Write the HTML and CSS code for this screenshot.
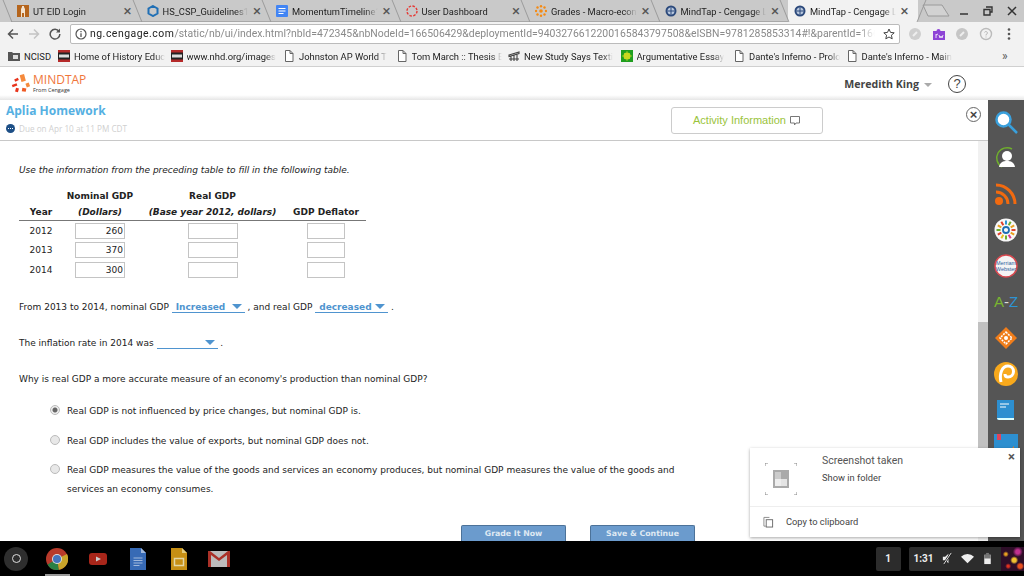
FILE: index.html
```html
<!DOCTYPE html>
<html lang="en">
<head>
  <meta charset="UTF-8">
  <title>MindTap - Cengage Learning</title>
  <link rel="stylesheet" href="styles.css">
</head>
<body>
  <!-- Tab strip -->
  <div class="tabstrip">
    <div class="tab">
      <svg class="favicon" viewBox="0 0 12 12"><rect width="12" height="12" fill="#b5651d"/><path d="M4 12V4l1-2V1h2v1l1 2v8H7V8H5v4z" fill="#f3e3cf"/></svg>
      <span class="tab-title">UT EID Login</span><span class="tab-x">×</span>
    </div>
    <div class="tab">
      <svg class="favicon" viewBox="0 0 12 12"><path d="M6 1l4.500 2.500v5L6 11 1.500 8.500v-5z" fill="none" stroke="#1f6fb5" stroke-width="2"/></svg>
      <span class="tab-title">HS_CSP_Guidelines1</span><span class="tab-x">×</span>
    </div>
    <div class="tab">
      <svg class="favicon" viewBox="0 0 12 12"><rect width="12" height="12" rx="1" fill="#4285f4"/><path d="M2.500 3.500h7M2.500 6h7M2.500 8.500h5" stroke="#fff"/></svg>
      <span class="tab-title">MomentumTimeline1</span><span class="tab-x">×</span>
    </div>
    <div class="tab">
      <svg class="favicon" viewBox="0 0 12 12"><circle cx="6" cy="6" r="5" fill="none" stroke="#e53935" stroke-width="1.400" stroke-dasharray="2.500 1.400"/></svg>
      <span class="tab-title">User Dashboard</span><span class="tab-x">×</span>
    </div>
    <div class="tab">
      <svg class="favicon" viewBox="0 0 12 12" fill="#f58a12"><circle cx="6" cy="6" r="1.800"/><circle cx="2.500" cy="2.500" r="1.200"/><circle cx="6" cy="1.200" r="1.200"/><circle cx="9.500" cy="2.500" r="1.200"/><circle cx="2.500" cy="9.500" r="1.200"/><circle cx="6" cy="10.800" r="1.200"/><circle cx="9.500" cy="9.500" r="1.200"/><circle cx="1" cy="6" r="1.200"/><circle cx="11" cy="6" r="1.200"/></svg>
      <span class="tab-title">Grades - Macro-econ</span><span class="tab-x">×</span>
    </div>
    <div class="tab">
      <svg class="favicon" viewBox="0 0 12 12"><circle cx="6" cy="6" r="5.500" fill="#2c4a7c"/><circle cx="6" cy="6" r="3.500" fill="#b9c8de"/><path d="M6 2.500v7M2.500 6h7" stroke="#2c4a7c"/></svg>
      <span class="tab-title">MindTap - Cengage L</span><span class="tab-x">×</span>
    </div>
    <div class="tab tab-active">
      <svg class="favicon" viewBox="0 0 12 12"><circle cx="6" cy="6" r="5.500" fill="#2c4a7c"/><circle cx="6" cy="6" r="3.500" fill="#b9c8de"/><path d="M6 2.500v7M2.500 6h7" stroke="#2c4a7c"/></svg>
      <span class="tab-title">MindTap - Cengage L</span><span class="tab-x">×</span>
    </div>
    <svg class="newtab" viewBox="0 0 28 13"><path d="M1 1h19l7 11H6z" fill="#d2d2d2" stroke="#9a9a9a"/></svg>
    <div class="winctrl">
      <svg viewBox="0 0 10 10"><path d="M1 8h8" stroke="#333" stroke-width="1.500"/></svg>
      <svg viewBox="0 0 10 10"><path d="M3 1h6v5H7M1 3.500h6v5.500H1z" fill="none" stroke="#333" stroke-width="1.400"/></svg>
      <svg viewBox="0 0 10 10"><path d="M1 1l8 8M9 1l-8 8" stroke="#333" stroke-width="1.500"/></svg>
    </div>
  </div>

  <!-- Toolbar -->
  <div class="toolbar">
    <svg class="nav-icon" viewBox="0 0 12 12"><path d="M11 6H2M6 1.500L1.500 6 6 10.500" fill="none" stroke="#555" stroke-width="1.500"/></svg>
    <svg class="nav-icon" viewBox="0 0 12 12"><path d="M1 6h9M6 1.500L10.500 6 6 10.500" fill="none" stroke="#c4c4c4" stroke-width="1.500"/></svg>
    <svg class="nav-icon" viewBox="0 0 12 12"><path d="M10 3.500A4.800 4.800 0 1 0 10.800 6" fill="none" stroke="#555" stroke-width="1.500"/><path d="M11 0.500V4.500H7z" fill="#555"/></svg>
    <div class="omnibox">
      <svg class="info" viewBox="0 0 12 12"><circle cx="6" cy="6" r="5" fill="none" stroke="#555" stroke-width="1.200"/><path d="M6 5.200V9M6 3v1.200" stroke="#555" stroke-width="1.300"/></svg>
      <span class="url"><b>ng.cengage.com</b>/static/nb/ui/index.html?nbId=472345&amp;nbNodeId=166506429&amp;deploymentId=9403276612200165843797508&amp;eISBN=9781285853314#!&amp;parentId=166506429</span>
      <svg class="star" viewBox="0 0 12 12"><path d="M6 1l1.500 3.400 3.700.4-2.800 2.400.8 3.600L6 9l-3.200 1.800.8-3.600L.8 4.800l3.700-.4z" fill="none" stroke="#444"/></svg>
    </div>
    <div class="extensions">
      <svg viewBox="0 0 14 14"><circle cx="7" cy="7" r="6" fill="#cfcfcf"/><path d="M5 9l4-4" stroke="#eee" stroke-width="2"/></svg>
      <svg viewBox="0 0 14 14"><path d="M1 4h3.500a2 2 0 0 1 4 0H13v9H1z" fill="#8e44d6"/><path d="M4 7v4M4 8l2-1M7 8l1 3 1-2 1 2 1-3" fill="none" stroke="#fff" stroke-width=".8"/></svg>
      <svg viewBox="0 0 14 14"><circle cx="7" cy="7" r="6" fill="#c6c6c6"/><path d="M5 9l4-4" stroke="#eee" stroke-width="2"/></svg>
      <svg viewBox="0 0 14 14"><circle cx="7" cy="7" r="5.500" fill="none" stroke="#bbb" stroke-width="1.400"/><path d="M5.500 5.500a1.500 1.500 0 1 1 1.500 2v1M7 9.500v1" fill="none" stroke="#bbb"/></svg>
      <svg viewBox="0 0 14 14" fill="#555"><circle cx="7" cy="2.500" r="1.300"/><circle cx="7" cy="7" r="1.300"/><circle cx="7" cy="11.500" r="1.300"/></svg>
    </div>
  </div>

  <!-- Bookmarks -->
  <div class="bookmarks">
    <div class="bm bm-first">
      <svg class="bm-icon" viewBox="0 0 12 12"><path d="M0 2h4l1 1h7v8H0z" fill="#555"/><rect x="5" y="5" width="5" height="4" fill="#ddd"/></svg>
      <span class="bm-label">NCISD</span>
    </div>
    <div class="bm">
      <svg class="bm-icon" viewBox="0 0 12 12"><rect width="12" height="12" fill="#222"/><rect y="0" width="12" height="2.500" fill="#b52a2a"/><rect y="9.500" width="12" height="2.500" fill="#b52a2a"/><rect x="1" y="4.500" width="10" height="3" fill="#ddd"/></svg>
      <span class="bm-label">Home of History Educ</span>
    </div>
    <div class="bm">
      <svg class="bm-icon" viewBox="0 0 12 12"><rect width="12" height="12" fill="#222"/><rect y="0" width="12" height="2.500" fill="#b52a2a"/><rect y="9.500" width="12" height="2.500" fill="#b52a2a"/><rect x="1" y="4.500" width="10" height="3" fill="#ddd"/></svg>
      <span class="bm-label">www.nhd.org/images</span>
    </div>
    <div class="bm">
      <svg class="bm-icon" viewBox="0 0 12 12"><path d="M2.500 .5h4.500l3 3v8h-7.500zM7 .5v3h3" fill="#fff" stroke="#666"/></svg>
      <span class="bm-label">Johnston AP World T</span>
    </div>
    <div class="bm">
      <svg class="bm-icon" viewBox="0 0 12 12"><path d="M2.500 .5h4.500l3 3v8h-7.500zM7 .5v3h3" fill="#fff" stroke="#666"/></svg>
      <span class="bm-label">Tom March :: Thesis E</span>
    </div>
    <div class="bm">
      <svg class="bm-icon" viewBox="0 0 12 12"><path d="M1 5l10-3v1.500L1 6.500zM3 6v5M6 5.500V11M9 4.500V11M1 9h10" fill="none" stroke="#444" stroke-width="1.100"/></svg>
      <span class="bm-label">New Study Says Texti</span>
    </div>
    <div class="bm">
      <svg class="bm-icon" viewBox="0 0 12 12"><rect width="12" height="12" fill="#1f9e1f"/><circle cx="6" cy="6" r="3.500" fill="#c8d820"/><path d="M6 1v10M1 6h10M3 3l6 6M9 3l-6 6" stroke="#c8d820" stroke-width=".7"/></svg>
      <span class="bm-label">Argumentative Essay</span>
    </div>
    <div class="bm">
      <svg class="bm-icon" viewBox="0 0 12 12"><path d="M2.500 .5h4.500l3 3v8h-7.500zM7 .5v3h3" fill="#fff" stroke="#666"/></svg>
      <span class="bm-label">Dante's Inferno - Prolo</span>
    </div>
    <div class="bm">
      <svg class="bm-icon" viewBox="0 0 12 12"><path d="M2.500 .5h4.500l3 3v8h-7.500zM7 .5v3h3" fill="#fff" stroke="#666"/></svg>
      <span class="bm-label">Dante's Inferno - Main</span>
    </div>
    <span class="bm-more">»</span>
  </div>

  <!-- MindTap header -->
  <div class="mt-header">
    <div class="logo">
      <svg class="logo-mark" viewBox="0 0 19 19">
        <rect x="9.500" y="0.500" width="4.500" height="7" transform="rotate(-15 11.700 4)" fill="#f58a3c"/>
        <rect x="15" y="9" width="3.500" height="4" transform="rotate(-20 16.700 11)" fill="#f58a3c"/>
        <rect x="11" y="14" width="4" height="3.500" transform="rotate(10 13 16)" fill="#ee5a24"/>
        <rect x="4.500" y="14" width="3" height="4" transform="rotate(15 6 16)" fill="#e8341c"/>
        <rect x="1" y="10" width="5" height="2.500" transform="rotate(-20 3.500 11)" fill="#e8341c"/>
        <rect x="3.500" y="4.500" width="4" height="2.500" transform="rotate(-25 5.500 5.700)" fill="#e8341c"/>
      </svg>
      <div class="logo-text">
        <div class="logo-name">MINDTAP</div>
        <div class="logo-sub">From Cengage</div>
      </div>
    </div>
    <div class="user">Meredith King<span class="caret"></span></div>
    <div class="help">?</div>
  </div>

  <div class="app">
    <div class="main">
      <div class="activity-head">
        <div>
          <div class="activity-title">Aplia Homework</div>
          <div class="due">
            <svg class="due-dot" viewBox="0 0 9 9"><circle cx="4.500" cy="4.500" r="4.500" fill="#1d4f86"/><path d="M2 4.500h1M4 4.500h1M6 4.500h1" stroke="#fff"/></svg>
            Due on Apr 10 at 11 PM CDT
          </div>
        </div>
        <div class="activity-info"><span class="info-label">Activity Information</span>
          <svg viewBox="0 0 12 12"><path d="M1.500 1.500h9v6.500H7l-1.500 2V8h-4z" fill="none" stroke="#777"/></svg>
        </div>
        <div class="close-circle">×</div>
      </div>

      <div class="scroll-row">
        <div class="question">
          <p class="intro">Use the information from the preceding table to fill in the following table.</p>

          <table class="gdp">
            <thead>
              <tr class="h1"><th></th><th>Nominal GDP</th><th>Real GDP</th><th></th></tr>
              <tr class="h2"><th>Year</th><th><em>(Dollars)</em></th><th><em>(Base year 2012, dollars)</em></th><th>GDP Deflator</th></tr>
            </thead>
            <tbody>
              <tr><td>2012</td><td><span class="cell c1">260</span></td><td><span class="cell c2"></span></td><td><span class="cell c3"></span></td></tr>
              <tr><td>2013</td><td><span class="cell c1">370</span></td><td><span class="cell c2"></span></td><td><span class="cell c3"></span></td></tr>
              <tr><td>2014</td><td><span class="cell c1">300</span></td><td><span class="cell c2"></span></td><td><span class="cell c3"></span></td></tr>
            </tbody>
          </table>

          <p class="line l-a">From 2013 to 2014, nominal GDP <span class="pick p-wide">Increased<i></i></span> , and real GDP <span class="pick p-wide">decreased<i></i></span> .</p>
          <p class="line l-b">The inflation rate in 2014 was <span class="pick p-blank"><i></i></span> .</p>
          <p class="line l-c">Why is real GDP a more accurate measure of an economy's production than nominal GDP?</p>

          <div class="choice c-first"><span class="radio radio-on"></span><span>Real GDP is not influenced by price changes, but nominal GDP is.</span></div>
          <div class="choice"><span class="radio"></span><span>Real GDP includes the value of exports, but nominal GDP does not.</span></div>
          <div class="choice c-last"><span class="radio"></span><span>Real GDP measures the value of the goods and services an economy produces, but nominal GDP measures the value of the goods and services an economy consumes.</span></div>

          <div class="actions">
            <button class="btn">Grade It Now</button>
            <button class="btn">Save &amp; Continue</button>
          </div>
        </div>
        <div class="scrollbar"><div class="thumb"></div></div>
      </div>
    </div>

    <!-- Right tool dock -->
    <div class="dock">
      <svg viewBox="0 0 24 24"><circle cx="9.500" cy="9.500" r="7" fill="#fff" stroke="#3aa0dc" stroke-width="2.500"/><path d="M14.500 14.500l8.500 8.500" stroke="#3aa0dc" stroke-width="2.500"/></svg>
      <svg viewBox="0 0 24 24"><path d="M18 3A10 10 0 1 0 8 21" fill="none" stroke="#6fae2d" stroke-width="1.500"/><circle cx="13" cy="10" r="5" fill="#fff"/><path d="M5 21c1-5 4-6 8-6s7 1 8 6z" fill="#fff"/></svg>
      <svg viewBox="0 0 24 24"><circle cx="5" cy="19" r="4" fill="#f26a0f"/><path d="M2 10a12 12 0 0 1 12 12M2 3a19 19 0 0 1 19 19" fill="none" stroke="#f26a0f" stroke-width="3"/></svg>
      <svg viewBox="0 0 24 24">
        <circle cx="12" cy="12" r="11.500" fill="#f8f8f8"/>
        <g stroke-width="2">
          <path d="M12 2.500v4" stroke="#2d94d4"/><path d="M16.700 3.800l-2 3.500" stroke="#6fae2d"/><path d="M20.200 7.300l-3.500 2" stroke="#e8a020"/>
          <path d="M21.500 12h-4" stroke="#e0402c"/><path d="M20.200 16.700l-3.500-2" stroke="#e8a020"/><path d="M16.700 20.200l-2-3.500" stroke="#d83a8c"/>
          <path d="M12 21.500v-4" stroke="#6fae2d"/><path d="M7.300 20.200l2-3.500" stroke="#e8c020"/><path d="M3.800 16.700l3.500-2" stroke="#e0402c"/>
          <path d="M2.500 12h4" stroke="#6fae2d"/><path d="M3.800 7.300l3.500 2" stroke="#e8a020"/><path d="M7.300 3.800l2 3.500" stroke="#e0402c"/>
        </g>
        <circle cx="12" cy="12" r="3" fill="none" stroke="#1f6fb5" stroke-width="1.800"/>
      </svg>
      <svg viewBox="0 0 24 24"><circle cx="12" cy="12" r="11" fill="#f4f4f4" stroke="#d9484f" stroke-width="1.500"/><text x="12" y="11" class="mw-text">Merriam</text><text x="12" y="16.500" class="mw-text">Webster</text></svg>
      <div class="az"><span class="az-a">A</span><span class="az-d">-</span><span class="az-z">Z</span></div>
      <svg viewBox="0 0 24 24"><path d="M12 1l11 11-11 11L1 12z" fill="#f07d1a"/><path d="M12 6l6 6-6 6-6-6z" fill="none" stroke="#fff" stroke-width="1.500" stroke-dasharray="2 1"/><circle cx="12" cy="12" r="2" fill="#fff"/></svg>
      <svg viewBox="0 0 24 24"><circle cx="12" cy="12" r="12" fill="#f8a91c"/><path d="M7 20C5 12 8 4 14 4a5 5 0 0 1 0 11c-2 0-3-1-3-3" fill="none" stroke="#fff" stroke-width="3"/></svg>
      <svg viewBox="0 0 24 24"><path d="M3 2h17v20H5a2 2 0 0 1-2-2z" fill="#2d8fd0"/><path d="M3 20a2 2 0 0 0 2 2h15v-2H5z" fill="#dff"/><path d="M6 6h9M6 9h6" stroke="#fff"/></svg>
      <svg viewBox="0 0 24 24"><rect width="24" height="24" fill="#2d8fd0"/><rect x="3" y="0" width="4" height="6" fill="#e0445c"/><path d="M12 22l8-10v10z" fill="#f07d1a"/></svg>
    </div>
  </div>

  <!-- Screenshot notification -->
  <div class="toast">
    <span class="toast-x">×</span>
    <div class="toast-top">
      <svg class="toast-thumb" viewBox="0 0 32 32">
        <path d="M0 3V0h3M29 0h3v3M32 29v3h-3M3 32H0v-3" fill="none" stroke="#888"/>
        <rect x="8" y="7" width="16" height="18" fill="#aaa"/><rect x="10" y="9" width="6" height="7" fill="#ccc"/><rect x="16" y="16" width="6" height="7" fill="#e4e4e4"/><rect x="10" y="16" width="6" height="7" fill="#eee"/>
      </svg>
      <div>
        <div class="toast-title">Screenshot taken</div>
        <div class="toast-sub">Show in folder</div>
      </div>
    </div>
    <div class="toast-action">
      <svg viewBox="0 0 12 12"><path d="M3 10.500H1V1h6" fill="none" stroke="#888"/><rect x="3.500" y="3.500" width="7" height="8" fill="none" stroke="#666"/></svg>
      <span>Copy to clipboard</span>
    </div>
  </div>

  <!-- Chrome OS shelf -->
  <div class="shelf">
    <div class="launcher"><span></span></div>
    <div class="app-icon app-running">
      <svg viewBox="0 0 22 22"><circle cx="11" cy="11" r="11" fill="#b83a2b"/><path d="M11 11L1.500 16.500A11 11 0 0 0 13 21.800z" fill="#2a8044"/><path d="M11 11l2 10.800A11 11 0 0 0 21 6z" fill="#c9a42a"/><circle cx="11" cy="11" r="5" fill="#ddd"/><circle cx="11" cy="11" r="4" fill="#4474bd"/></svg>
    </div>
    <div class="app-icon">
      <svg viewBox="0 0 22 22"><rect x="2" y="5" width="18" height="12" rx="3" fill="#a8261a"/><path d="M9 8.500l5 2.500-5 2.500z" fill="#ccc"/></svg>
    </div>
    <div class="app-icon">
      <svg viewBox="0 0 22 22"><path d="M3 0h11l5 5v17H3z" fill="#376ab5"/><path d="M14 0l5 5h-5z" fill="#a0b8dc"/><path d="M6.500 10h9M6.500 12.500h9M6.500 15h9M6.500 17.500h6" stroke="#a0b8dc"/></svg>
    </div>
    <div class="app-icon">
      <svg viewBox="0 0 22 22"><path d="M3 0h11l5 5v17H3z" fill="#c68f15"/><path d="M14 0l5 5h-5z" fill="#e2cc80"/><rect x="6.500" y="10.500" width="9" height="7" fill="none" stroke="#e2d6a6" stroke-width="1.500"/></svg>
    </div>
    <div class="app-icon">
      <svg viewBox="0 0 22 22"><rect y="3" width="22" height="16" fill="#bcbcbc"/><path d="M0 3v16h3V7l8 6 8-6v12h3V3h-2l-9 7-9-7z" fill="#aa3128"/></svg>
    </div>
    <div class="status-count">1</div>
    <div class="status">
      <span class="clock">1:31</span>
      <svg viewBox="0 0 14 14"><path d="M2 5h2.500L8 2v10L4.500 9H2z" fill="#eee"/><path d="M11 1L3 13" stroke="#222" stroke-width="2.500"/><path d="M11 1L3 13" stroke="#eee"/></svg>
      <svg viewBox="0 0 14 14"><path d="M0 5a10 10 0 0 1 14 0L7 12z" fill="#eee"/></svg>
      <svg viewBox="0 0 14 14"><rect x="3.500" y="3" width="7" height="10" fill="#eee"/><rect x="3.500" y="3" width="7" height="4" fill="#777"/><rect x="5.500" y="1" width="3" height="2" fill="#777"/></svg>
      <div class="wallpaper"></div>
    </div>
  </div>
</body>
</html>
```
FILE: styles.css
```css
/* page frame */
html, body {
  margin: 0;
  padding: 0;
  width: 1024px;
  height: 576px;
  overflow: hidden;
}
body {
  position: relative;
  display: flex;
  flex-direction: column;
  font-family: "DejaVu Sans", Verdana, sans-serif;
  background: #fff;
  color: #222;
}

/* tabs */
.tabstrip {
  height: 22px;
  flex: none;
  display: flex;
  align-items: stretch;
  padding-left: 11px;
  background: #c9c9c9;
  border-bottom: 0;
  font-family: Roboto, sans-serif;
  font-size: 9.300px;
  color: #222;
}
.tab {
  position: relative;
  width: 129.500px;
  flex: none;
  display: flex;
  align-items: center;
  box-sizing: border-box;
  padding: 0 6px 0 6px;
  box-shadow: inset 0 -1px 0 #a8a8a8;
}
.tab::before {
  content: "";
  position: absolute;
  left: -4px;
  top: 0;
  bottom: 0;
  border-left: 1px solid #9b9b9b;
  transform: skewX(22deg);
}
.tab-active {
  background: #f2f2f2;
  box-shadow: none;
}
.tab-active::after {
  content: "";
  position: absolute;
  right: -4px;
  top: 0;
  bottom: 0;
  border-left: 1px solid #9b9b9b;
  transform: skewX(-22deg);
}
.favicon {
  width: 12px;
  height: 12px;
  flex: none;
  margin-right: 4px;
}
.tab-title {
  flex: 1;
  white-space: nowrap;
  overflow: hidden;
  -webkit-mask-image: linear-gradient(90deg, #000 85%, transparent);
  mask-image: linear-gradient(90deg, #000 85%, transparent);
}
.tab-x {
  width: 14px;
  flex: none;
  text-align: center;
  font-size: 15px;
  color: #555;
  margin-left: 2px;
}
.newtab {
  width: 28px;
  height: 13px;
  flex: none;
  margin: 4px 0 0 4px;
}
.winctrl {
  margin-left: auto;
  display: flex;
  align-items: center;
  gap: 14px;
  padding-right: 7px;
}
.winctrl svg {
  width: 10px;
  height: 10px;
}

/* toolbar */
.toolbar {
  height: 23px;
  flex: none;
  display: flex;
  align-items: center;
  background: #f2f2f2;
  padding-left: 7px;
}
.nav-icon {
  width: 12px;
  height: 12px;
  flex: none;
  margin-right: 9px;
}
.omnibox {
  width: 830px;
  height: 20px;
  flex: none;
  box-sizing: border-box;
  display: flex;
  align-items: center;
  padding: 0 4px;
  background: #fff;
  border: 1px solid #bbb;
  border-radius: 2px;
  font-family: Roboto, sans-serif;
  font-size: 10.450px;
  color: #8a8a8a;
}
.info {
  width: 12px;
  height: 12px;
  flex: none;
  margin-right: 3px;
}
.url {
  flex: 1;
  overflow: hidden;
  white-space: nowrap;
  -webkit-mask-image: linear-gradient(90deg, #000 98%, transparent);
  mask-image: linear-gradient(90deg, #000 98%, transparent);
}
.url b {
  font-weight: 400;
  color: #222;
  letter-spacing: 0.500px;
}
.star {
  width: 12px;
  height: 12px;
  flex: none;
  margin-left: 8px;
}
.extensions {
  display: flex;
  gap: 9.500px;
  padding-left: 8px;
}
.extensions svg {
  width: 14px;
  height: 14px;
}

/* bookmarks */
.bookmarks {
  height: 22px;
  flex: none;
  box-sizing: border-box;
  display: flex;
  align-items: center;
  padding-left: 8px;
  background: #f2f2f2;
  border-bottom: 1px solid #d0d0d0;
  font-family: Roboto, sans-serif;
  font-size: 9.400px;
  color: #222;
}
.bm {
  width: 112.500px;
  flex: none;
  display: flex;
  align-items: center;
  gap: 4px;
  box-sizing: border-box;
  padding-right: 6px;
}
.bm-first {
  width: 50px;
}
.bm-icon {
  width: 12px;
  height: 12px;
  flex: none;
}
.bm-label {
  white-space: nowrap;
  overflow: hidden;
  padding-top: 1px;
  -webkit-mask-image: linear-gradient(90deg, #000 88%, transparent);
  mask-image: linear-gradient(90deg, #000 88%, transparent);
}
.bm-first .bm-label {
  -webkit-mask-image: none;
  mask-image: none;
}
.bm-more {
  margin-left: 44px;
  font-size: 12px;
  color: #555;
}

/* mindtap header */
.mt-header {
  height: 33px;
  flex: none;
  box-sizing: border-box;
  display: flex;
  align-items: center;
  padding: 0 58px 0 11px;
  background: linear-gradient(#fff 85%, #e6e6e6);
}
.logo {
  display: flex;
  align-items: center;
  gap: 3px;
}
.logo-mark {
  width: 19px;
  height: 19px;
}
.logo-name {
  font-family: "Open Sans", sans-serif;
  font-size: 12px;
  line-height: 12px;
  margin-top: 1px;
  color: #f0763a;
}
.logo-sub {
  font-family: "Open Sans", sans-serif;
  font-size: 5.500px;
  line-height: 7px;
  margin-top: 1px;
  color: #333;
}
.user {
  margin-left: auto;
  font-family: "Open Sans", sans-serif;
  font-size: 10.600px;
  font-weight: 700;
  color: #444;
}
.caret {
  display: inline-block;
  margin-left: 5px;
  vertical-align: 1px;
  border-left: 4px solid transparent;
  border-right: 4px solid transparent;
  border-top: 4px solid #aaa;
}
.help {
  width: 16px;
  height: 16px;
  margin-left: 16px;
  border: 1px solid #444;
  border-radius: 50%;
  text-align: center;
  font-family: "Liberation Sans", sans-serif;
  font-size: 13px;
  line-height: 16px;
  color: #444;
}

/* app area */
.app {
  flex: 1;
  min-height: 0;
  display: flex;
}
.main {
  width: 988px;
  flex: none;
  display: flex;
  flex-direction: column;
}
.activity-head {
  height: 41px;
  flex: none;
  box-sizing: border-box;
  display: flex;
  padding: 3px 7px 0 6px;
  border-bottom: 1px solid #c8c8c8;
}
.activity-title {
  font-family: "Open Sans", sans-serif;
  font-size: 12px;
  font-weight: 700;
  line-height: 15px;
  color: #55b0e2;
}
.due {
  display: flex;
  align-items: center;
  margin-top: 5px;
  font-family: "Open Sans", sans-serif;
  font-size: 8.200px;
  color: #d0d0d0;
}
.due-dot {
  width: 9px;
  height: 9px;
  margin-right: 4px;
}
.activity-info {
  width: 152px;
  height: 27px;
  box-sizing: border-box;
  margin: 4px 0 0 auto;
  display: flex;
  align-items: center;
  justify-content: center;
  gap: 3px;
  border: 1px solid #ccc;
  border-radius: 3px;
  font-family: "Liberation Sans", sans-serif;
  font-size: 11px;
  color: #9ac43c;
}
.info-label {
  padding-bottom: 1px;
}
.activity-info svg {
  width: 12px;
  height: 12px;
}
.close-circle {
  width: 13px;
  height: 13px;
  margin: 4px 0 0 143px;
  border: 1px solid #666;
  border-radius: 50%;
  text-align: center;
  font-family: "Liberation Sans", sans-serif;
  font-size: 13px;
  font-weight: 700;
  line-height: 13px;
  color: #444;
}
.scroll-row {
  flex: 1;
  min-height: 0;
  display: flex;
}
.question {
  flex: 1;
  min-width: 0;
  overflow: hidden;
  padding-left: 19px;
  font-size: 9px;
  color: #222;
}
.scrollbar {
  width: 10px;
  flex: none;
  display: flex;
  flex-direction: column;
  justify-content: flex-end;
  background: #f1f1f1;
}
.thumb {
  height: 213px;
  margin-bottom: 6px;
  background: #c1c1c1;
}
.intro {
  margin: 23px 0 0;
  font-style: italic;
  line-height: 12px;
}

/* table */
.gdp {
  margin-top: 14px;
  border-collapse: collapse;
  table-layout: fixed;
  width: 347px;
  font-size: 9px;
}
.gdp th {
  padding: 0;
  font-weight: 700;
  text-align: center;
  line-height: 12px;
}
.gdp th:nth-child(1), .gdp td:nth-child(1) {
  width: 44px;
  padding-right: 2px;
}
.gdp th:nth-child(2), .gdp td:nth-child(2) {
  width: 70px;
}
.gdp th:nth-child(3), .gdp td:nth-child(3) {
  width: 155px;
}
.gdp th:nth-child(4), .gdp td:nth-child(4) {
  padding-right: 4px;
}
.h2 th {
  padding-top: 4px;
  padding-bottom: 2px;
  border-bottom: 1px solid #777;
}
.gdp td {
  padding: 0;
  height: 19.500px;
  text-align: center;
}
.cell {
  display: inline-block;
  height: 16px;
  box-sizing: border-box;
  padding-right: 1px;
  vertical-align: middle;
  text-align: right;
  line-height: 15px;
  background: #fff;
  border: 1px solid #c4c4c4;
}
.c1 {
  width: 50px;
}
.c2 {
  width: 50px;
}
.c3 {
  width: 38px;
}

/* sentences and selects */
.line {
  margin: 0;
  line-height: 12px;
}
.l-a {
  margin-top: 21px;
}
.l-b {
  margin-top: 24px;
}
.l-c {
  margin-top: 24px;
}
.pick {
  display: inline-block;
  position: relative;
  box-sizing: border-box;
  height: 12px;
  padding-left: 4px;
  vertical-align: top;
  font-weight: 700;
  color: #4f94cf;
  border-bottom: 1px solid #4f94cf;
}
.p-wide {
  width: 73px;
}
.p-blank {
  width: 61px;
}
.pick i {
  position: absolute;
  right: 3px;
  top: 3px;
  border-left: 5px solid transparent;
  border-right: 5px solid transparent;
  border-top: 5px solid #4f94cf;
}
.choice {
  display: flex;
  gap: 7px;
  margin: 11px 0 0 31px;
  width: 640px;
  line-height: 19px;
}
.c-first {
  margin-top: 17px;
}
.c-last {
  margin-top: 10px;
}
.radio {
  width: 10px;
  height: 10px;
  box-sizing: border-box;
  flex: none;
  margin-top: 3px;
  border: 1px solid #bbb;
  border-radius: 50%;
  background: #e8e8e8;
}
.radio-on {
  background: radial-gradient(circle, #666 0 2px, #eee 3px);
}
.actions {
  display: flex;
  justify-content: flex-start;
  gap: 24px;
  margin: 26px 0 0 442px;
}
.btn {
  width: 105px;
  height: 26px;
  padding: 0 0 10px;
  border: 1px solid #4c7299;
  border-bottom: 0;
  border-radius: 2px 2px 0 0;
  background: #6b9bcd;
  font-family: "DejaVu Sans", sans-serif;
  font-size: 7.800px;
  font-weight: 700;
  color: #dfe9f3;
}

/* dock */
.dock {
  width: 36px;
  flex: none;
  display: flex;
  flex-direction: column;
  align-items: center;
  gap: 12px;
  padding-top: 10px;
  box-sizing: border-box;
  background: #555;
  overflow: hidden;
}
.dock svg {
  width: 24px;
  height: 24px;
  flex: none;
}
.az {
  height: 24px;
  flex: none;
  font-family: "Liberation Sans", sans-serif;
  font-size: 15px;
  line-height: 24px;
}
.az-a {
  color: #7ab530;
}
.az-d {
  color: #ddd;
}
.az-z {
  color: #2d94d4;
}
.mw-text {
  font-family: "Liberation Sans", sans-serif;
  font-size: 5.500px;
  fill: #2f5f9e;
  text-anchor: middle;
}

/* notification */
.toast {
  position: absolute;
  left: 750px;
  top: 448px;
  width: 270px;
  height: 89px;
  background: #fff;
  box-shadow: 0 1px 3px rgba(0, 0, 0, 0.35);
  font-family: Roboto, sans-serif;
  font-size: 10px;
  color: #444;
}
.toast-x {
  position: absolute;
  right: 5px;
  top: 1px;
  font-size: 13px;
  font-weight: 700;
  color: #555;
}
.toast-top {
  height: 59px;
  box-sizing: border-box;
  display: flex;
  gap: 25px;
  padding: 7px 0 0 15px;
  border-bottom: 1px solid #eee;
}
.toast-thumb {
  width: 32px;
  height: 32px;
  margin-top: 8px;
}
.toast-title {
  font-size: 10.500px;
  line-height: 12px;
  color: #555;
}
.toast-sub {
  margin-top: 5px;
  font-size: 9.300px;
  line-height: 12px;
}
.toast-action {
  height: 29px;
  display: flex;
  align-items: center;
  gap: 12px;
  padding-left: 13px;
  font-size: 9.300px;
}
.toast-action svg {
  width: 11px;
  height: 12px;
}

/* shelf */
.shelf {
  height: 35px;
  flex: none;
  display: flex;
  align-items: center;
  padding-left: 4px;
  background: #000;
  border-top: 0;
  color: #eee;
  font-family: Roboto, sans-serif;
}
.launcher {
  width: 24px;
  height: 24px;
  flex: none;
  display: flex;
  align-items: center;
  justify-content: center;
  border-radius: 50%;
  background: #2e2e2e;
}
.launcher span {
  width: 7px;
  height: 7px;
  border: 1.500px solid #ddd;
  border-radius: 50%;
}
.app-icon {
  position: relative;
  width: 40.500px;
  height: 35px;
  flex: none;
  display: flex;
  align-items: center;
  justify-content: center;
}
.app-icon svg {
  width: 22px;
  height: 22px;
}
.app-running {
  margin-left: 9px;
}
.app-running::after {
  content: "";
  position: absolute;
  left: 8px;
  right: 8px;
  bottom: 0;
  height: 2px;
  background: #999;
}
.status-count {
  width: 25px;
  height: 24px;
  flex: none;
  margin-left: 636px;
  border-radius: 2px;
  background: #2c2c2c;
  text-align: center;
  font-size: 10px;
  font-weight: 700;
  line-height: 24px;
}
.status {
  height: 24px;
  flex: none;
  display: flex;
  align-items: center;
  gap: 7px;
  margin-left: 8px;
  padding-left: 5px;
  border-radius: 2px;
  background: #2c2c2c;
  font-size: 10px;
  font-weight: 700;
}
.status svg {
  width: 13px;
  height: 13px;
}
.wallpaper {
  width: 24px;
  height: 24px;
  background:
    radial-gradient(circle at 20% 30%, #e8a020 0 1px, transparent 3px),
    radial-gradient(circle at 55% 55%, #f0c030 0 2px, transparent 4px),
    radial-gradient(circle at 80% 80%, #e85020 0 2px, transparent 4px),
    radial-gradient(circle at 30% 80%, #e03020 0 1px, transparent 3px),
    radial-gradient(circle at 70% 20%, #c03090 0 2px, transparent 5px),
    #2e0e28;
}
```
